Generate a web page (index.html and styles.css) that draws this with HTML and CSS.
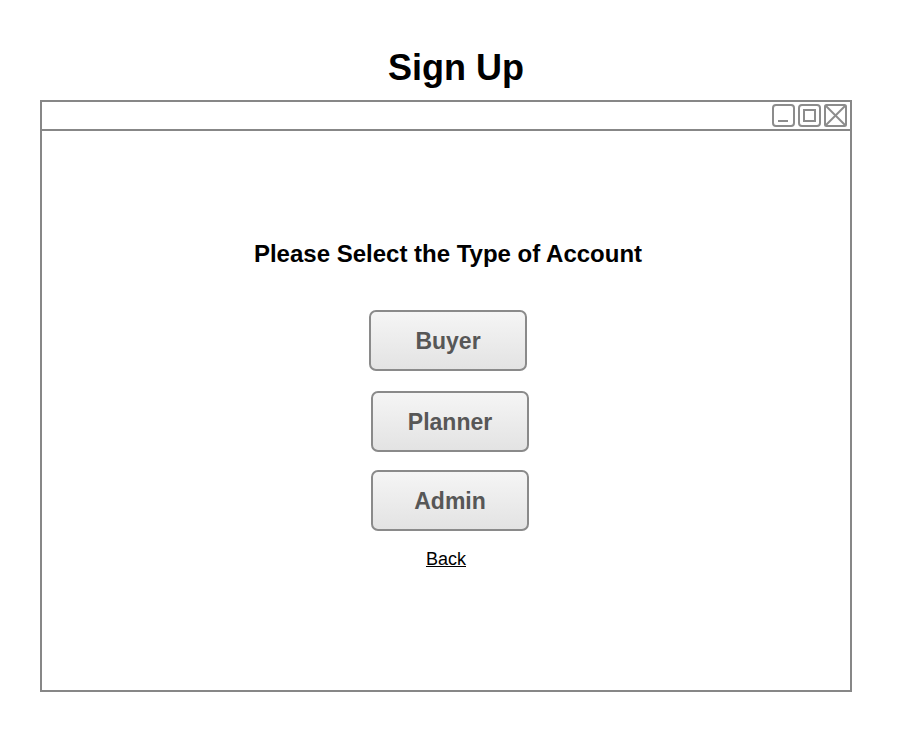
FILE: index.html
```html
<!DOCTYPE html>
<html>
<head>
<meta charset="utf-8">
<title>Sign Up</title>
<link rel="stylesheet" href="styles.css">
</head>
<body>
<h1 class="page-title">Sign Up</h1>
<div class="window">
  <div class="titlebar">
    <span class="ctrl">
      <svg width="23" height="23" viewBox="0 0 23 23"><rect x="1" y="1" width="21" height="21" rx="3" fill="none" stroke="#8c8c8c" stroke-width="2"/><line x1="6" y1="17" x2="16" y2="17" stroke="#8c8c8c" stroke-width="2"/></svg>
    </span>
    <span class="ctrl">
      <svg width="23" height="23" viewBox="0 0 23 23"><rect x="1" y="1" width="21" height="21" rx="3" fill="none" stroke="#8c8c8c" stroke-width="2"/><rect x="6" y="6" width="11" height="11" fill="none" stroke="#8c8c8c" stroke-width="2"/></svg>
    </span>
    <span class="ctrl">
      <svg width="23" height="23" viewBox="0 0 23 23"><rect x="1" y="1" width="21" height="21" rx="1.5" fill="none" stroke="#8c8c8c" stroke-width="2"/><line x1="2" y1="2" x2="21" y2="21" stroke="#8c8c8c" stroke-width="2"/><line x1="21" y1="2" x2="2" y2="21" stroke="#8c8c8c" stroke-width="2"/></svg>
    </span>
  </div>
  <div class="content">
    <h2 class="prompt">Please Select the Type of Account</h2>
    <button class="btn btn-buyer">Buyer</button>
    <button class="btn btn-planner">Planner</button>
    <button class="btn btn-admin">Admin</button>
    <a class="back" href="#">Back</a>
  </div>
</div>
</body>
</html>
```
FILE: styles.css
```css
html, body {
  margin: 0;
  padding: 0;
  background: #ffffff;
  font-family: "Liberation Sans", Arial, sans-serif;
}

.page-title {
  margin: 0;
  padding-top: 47px;
  height: 42px;
  line-height: 42px;
  font-size: 36px;
  font-weight: bold;
  text-align: center;
  color: #000;
  padding-left: 14px;
}

.window {
  margin: 11px 0 0 40px;
  width: 808px;
  height: 588px;
  border: 2px solid #878787;
  display: flex;
  flex-direction: column;
}

.titlebar {
  height: 29px;
  flex: none;
  border-bottom: 2px solid #878787;
  display: flex;
  justify-content: flex-end;
  align-items: flex-start;
  padding: 2px 3px 0 0;
  box-sizing: border-box;
  gap: 3px;
}

.ctrl {
  display: block;
  width: 23px;
  height: 23px;
}

.ctrl svg {
  display: block;
}

.content {
  flex: 1;
  display: flex;
  flex-direction: column;
  align-items: center;
  padding-top: 109px;
}

.prompt {
  margin: 0;
  font-size: 24px;
  line-height: 28px;
  font-weight: bold;
  color: #000;
  padding-left: 4px;
}

.btn {
  width: 158px;
  height: 61px;
  border: 2px solid #8a8a8a;
  border-radius: 7px;
  background: linear-gradient(#f5f5f5, #e3e3e3);
  color: #575757;
  font-family: "Liberation Sans", Arial, sans-serif;
  font-size: 23px;
  font-weight: bold;
  padding: 2px 0 0 0;
  box-sizing: border-box;
  flex: none;
}

.btn-buyer {
  margin-top: 42px;
  margin-left: 4px;
}

.btn-planner {
  margin-top: 20px;
  margin-left: 8px;
}

.btn-admin {
  margin-top: 18px;
  margin-left: 8px;
}

.back {
  margin-top: 18px;
  font-size: 18px;
  line-height: 21px;
  color: #000;
  text-decoration: underline;
}
```
